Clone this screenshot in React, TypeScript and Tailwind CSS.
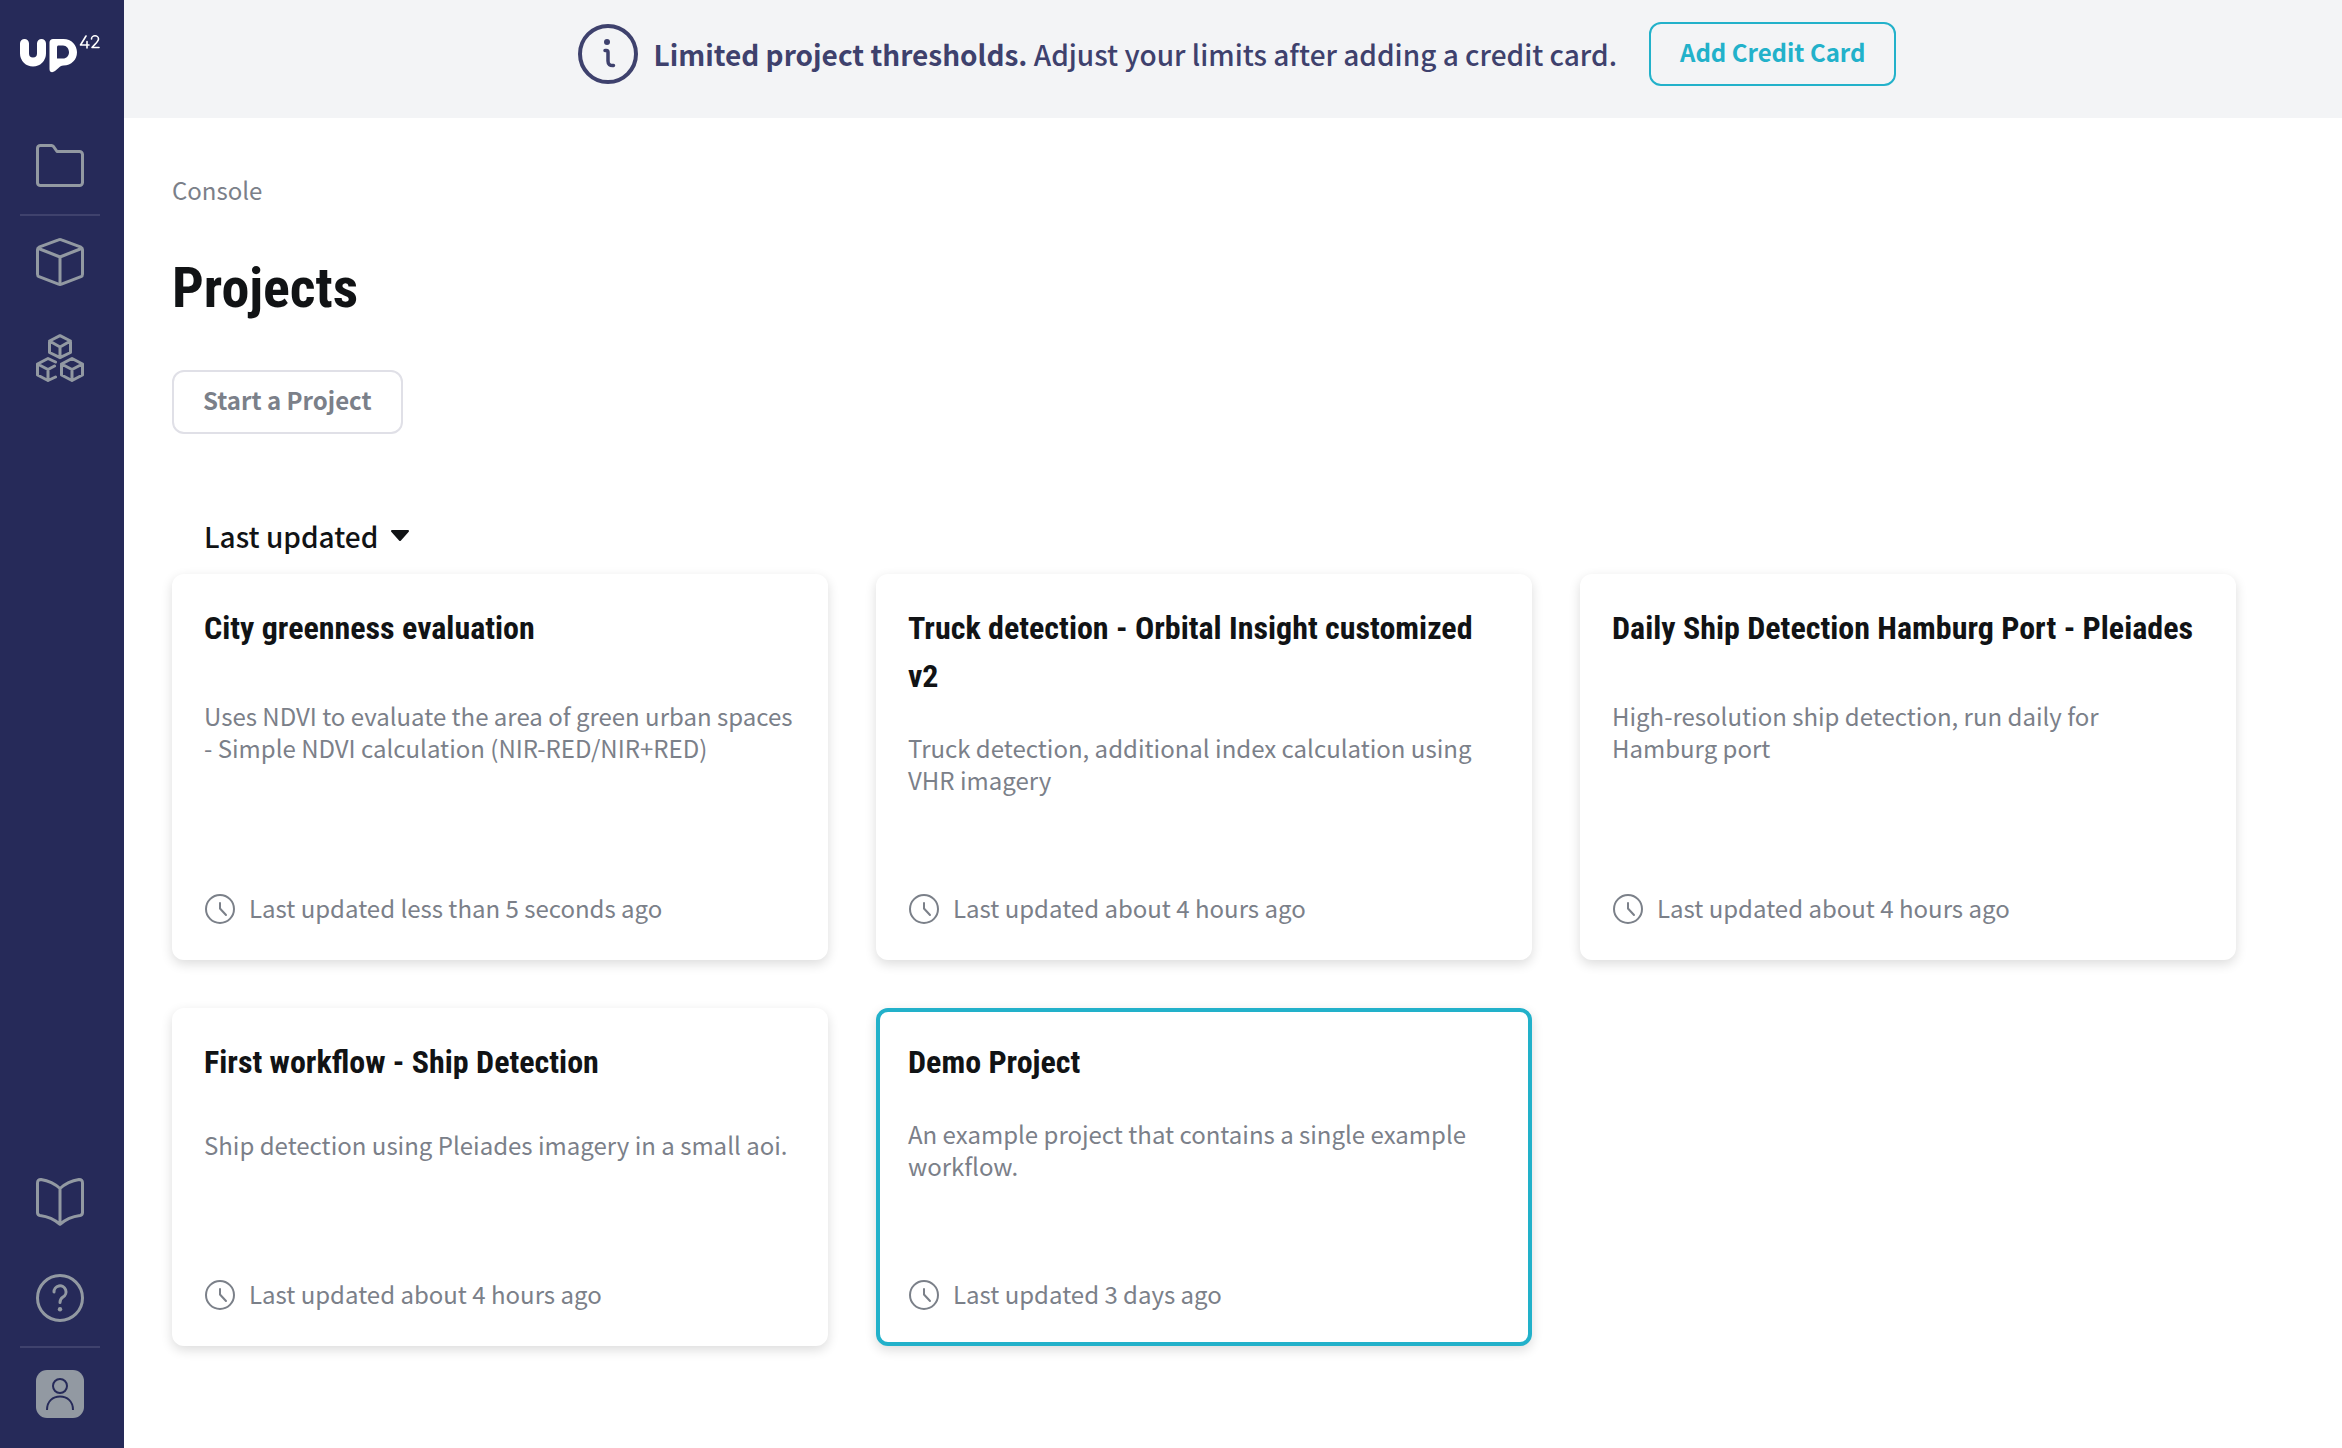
import type { ReactNode } from "react";

type Project = {
  title: string;
  description: string;
  updated: string;
  highlighted?: boolean;
};

const projects: Project[] = [
  {
    title: "City greenness evaluation",
    description:
      "Uses NDVI to evaluate the area of green urban spaces - Simple NDVI calculation (NIR-RED/NIR+RED)",
    updated: "Last updated less than 5 seconds ago",
  },
  {
    title: "Truck detection - Orbital Insight customized v2",
    description: "Truck detection, additional index calculation using VHR imagery",
    updated: "Last updated about 4 hours ago",
  },
  {
    title: "Daily Ship Detection Hamburg Port - Pleiades",
    description: "High-resolution ship detection, run daily for Hamburg port",
    updated: "Last updated about 4 hours ago",
  },
  {
    title: "First workflow - Ship Detection",
    description: "Ship detection using Pleiades imagery in a small aoi.",
    updated: "Last updated about 4 hours ago",
  },
  {
    title: "Demo Project",
    description: "An example project that contains a single example workflow.",
    updated: "Last updated 3 days ago",
    highlighted: true,
  },
];

function Logo() {
  return (
    <svg viewBox="0 0 80 38" className="h-[38px] w-20" role="img" aria-label="UP42">
      <path d="M4.5 8.5v10a8.5 8.5 0 0 0 17 0v-10" fill="none" stroke="#fff" strokeWidth="9" strokeLinecap="round" />
      <path
        fill="#fff"
        fillRule="evenodd"
        d="M33 4H43.500C51.500 4 57 10 57 17.300S51.500 30.500 43.500 30.500C41 30.500 40 31.500 38.500 33L35 36C32.500 38 29.500 37.500 29.500 34V7.500C29.500 5.500 31 4 33 4ZM38.500 10.500C37.700 10.500 37 11.200 37 12V23.500H43C46.500 23.500 49 20.800 49 17.200S46.500 10.500 43 10.500Z"
      />
      <g fill="none" stroke="#fff" strokeWidth="1.600" strokeLinecap="round" strokeLinejoin="round">
        <path d="M66 1 60.500 10H69M67 6.500V13" />
        <path d="M71.500 4A3.500 3.200 0 0 1 78.500 4C78.500 6.500 75 9 72 12.500H79" />
      </g>
    </svg>
  );
}

function NavIcon({ children }: { children: ReactNode }) {
  return (
    <svg
      viewBox="0 0 48 48"
      className="size-12"
      fill="none"
      stroke="currentColor"
      strokeWidth="3"
      strokeLinejoin="round"
      strokeLinecap="round"
      aria-hidden="true"
    >
      {children}
    </svg>
  );
}

function NavLink({ label, children }: { label: string; children: ReactNode }) {
  return (
    <a href="#" aria-label={label} className="flex h-24 items-center justify-center text-[#9299a2]">
      {children}
    </a>
  );
}

function Divider() {
  return <hr className="-mb-0.5 w-20 border-t-2 border-[#3f426d]" />;
}

function Sidebar() {
  return (
    <nav aria-label="Main" className="flex w-[124px] shrink-0 flex-col justify-between bg-[#262a59] pr-1 pb-1.5">
      <div className="flex flex-col items-center">
        <a href="#" aria-label="Home" className="pt-[35px] pb-[45px]">
          <Logo />
        </a>
        <NavLink label="Projects">
          <NavIcon>
            <path d="M1.500 6V41A3 3 0 0 0 4.500 43.500H43.500A3 3 0 0 0 46.500 40.500V12.500A3 3 0 0 0 43.500 9.500H21L17.500 4.500A3 3 0 0 0 15.500 3.500H4.500A3 3 0 0 0 1.500 6Z" />
          </NavIcon>
        </NavLink>
        <Divider />
        <NavLink label="Blocks">
          <NavIcon>
            <path d="M22.500 1.900 3 9.200Q1.500 10 1.500 11.800V36.300Q1.500 38 3 38.700L22.500 46.100Q24 46.700 25.500 46.100L45 38.700Q46.500 38 46.500 36.300V11.800Q46.500 10 45 9.200L25.500 1.900Q24 1.300 22.500 1.900Z" />
            <path d="M2.500 10.500 24 19 45.500 10.500M24 19V46" />
          </NavIcon>
        </NavLink>
        <NavLink label="Workflows">
          <NavIcon>
            <path d="M24 1.700 34.500 7V18.500L24 23.700 13.500 18.500V7ZM13.500 7 24 13 34.500 7M24 13V23.500" />
            <path d="M36 24.500 46.500 30V41L36 46.500 25.500 41V30ZM25.500 30 36 35.500 46.500 30M36 35.500V46.500" />
            <path d="M19.500 28 12 24.500 1.500 30V41L12 46.500 19.500 43M1.500 30 12 35.500 18.500 32M12 35.500V46.500" />
          </NavIcon>
        </NavLink>
      </div>
      <div className="flex flex-col items-center">
        <NavLink label="Documentation">
          <NavIcon>
            <path d="M24 10.500C19 6 13 3 5 1.600Q1.500 1.500 1.500 5V34.500Q1.500 37 4 37.500C12 38.500 18 41 24 46.300C30 41 36 38.500 44 37.500Q46.500 37 46.500 34.500V5Q46.500 1.500 43 1.600C35 3 29 6 24 10.500ZM24 10.500V46" />
          </NavIcon>
        </NavLink>
        <NavLink label="Help">
          <NavIcon>
            <circle cx="24" cy="24" r="22.500" />
            <path d="M18 18A6 6 0 1 1 27 23C25 24.300 24 25.500 24 28.500" />
            <circle cx="24" cy="35.200" r="2.200" fill="currentColor" stroke="none" />
          </NavIcon>
        </NavLink>
        <Divider />
        <NavLink label="Account">
          <svg viewBox="0 0 48 48" className="size-12" fill="none" stroke="#262a59" strokeWidth="2" aria-hidden="true">
            <rect width="48" height="48" rx="11" fill="#9299a2" stroke="none" />
            <circle cx="24" cy="16" r="7" />
            <path d="M11 40C11 31 17 26.500 24 26.500S37 31 37 40" />
          </svg>
        </NavLink>
      </div>
    </nav>
  );
}

function Banner() {
  return (
    <div className="flex items-center justify-center gap-8 bg-[#f3f4f6] pt-[22px] pb-8 pl-2 text-[#3e416d]">
      <div className="flex items-center gap-4">
        <svg viewBox="0 0 60 60" className="size-[60px]" fill="none" stroke="currentColor" strokeWidth="4" aria-hidden="true">
          <circle cx="30" cy="30" r="28" />
          <circle cx="29" cy="18" r="3" fill="currentColor" stroke="none" />
          <path d="M27 26.500H28.500Q30 26.500 30 28.500V37Q30 42 35.500 41.500" strokeWidth="3.500" strokeLinecap="round" />
        </svg>
        <p className="text-[28px] leading-10 font-medium">
          <strong className="font-bold">Limited project thresholds.</strong> Adjust your limits after adding a credit card.
        </p>
      </div>
      <button
        type="button"
        className="h-16 rounded-xl border-2 border-[#22b1ca] px-[29px] pb-1 text-2xl font-bold text-[#22b1ca]"
      >
        Add Credit Card
      </button>
    </div>
  );
}

function ProjectCard({ title, description, updated, highlighted }: Project) {
  return (
    <article
      className={
        "flex flex-col rounded-xl border-4 bg-white px-7 pt-[26px] pb-[30px] shadow-[0_4px_12px_rgba(0,0,0,0.14)] " +
        (highlighted ? "border-[#22b1ca]" : "border-white")
      }
    >
      <h2 className="font-['Roboto_Condensed',Roboto,sans-serif] text-[32px] leading-12 font-bold text-[#111315]">
        {title}
      </h2>
      <div className="grow basis-8" />
      <p className="text-2xl leading-8 text-[#7b8089]">{description}</p>
      <div className="grow-[2] basis-24" />
      <div className="flex items-center gap-[13px] text-2xl leading-8 text-[#7b8089]">
        <svg viewBox="0 0 32 32" className="size-8" fill="none" stroke="currentColor" strokeWidth="2" aria-hidden="true">
          <circle cx="16" cy="16" r="14" />
          <path d="M16 10V15.500L22 22" strokeLinecap="round" />
        </svg>
        <p className="pb-0.5">{updated}</p>
      </div>
    </article>
  );
}

export default function App() {
  return (
    <div className="flex min-h-screen bg-white font-['Noto_Sans_CJK_JP',sans-serif]">
      <Sidebar />
      <div className="min-w-0 flex-1">
        <Banner />
        <main className="flex flex-col items-start pt-[54px] pr-[106px] pb-24 pl-12">
          <a href="#" className="text-2xl leading-9 text-[#7b8089]">
            Console
          </a>
          <h1 className="mt-10 font-['Roboto_Condensed',Roboto,sans-serif] text-[56px] leading-20 font-bold text-[#111315]">
            Projects
          </h1>
          <button
            type="button"
            className="mt-[42px] h-16 rounded-xl border-2 border-[#e0e0e7] px-[29px] pb-1 text-2xl font-bold text-[#7b8089]"
          >
            Start a Project
          </button>
          <div className="mt-[78px] ml-8 flex items-center">
            <select
              aria-label="Sort projects"
              className="field-sizing-content appearance-none bg-transparent pr-9 text-[28px] leading-12 font-medium text-[#111315]"
            >
              <option>Last updated</option>
            </select>
            <svg viewBox="0 0 20 12" className="pointer-events-none -ml-6 h-3 w-5" aria-hidden="true">
              <path d="M2 1H18L10 10Z" fill="#111315" stroke="#111315" strokeWidth="2" strokeLinejoin="round" />
            </svg>
          </div>
          <div className="mt-3.5 grid w-full grid-cols-3 gap-12">
            {projects.map((project) => (
              <ProjectCard key={project.title} {...project} />
            ))}
          </div>
        </main>
      </div>
    </div>
  );
}
